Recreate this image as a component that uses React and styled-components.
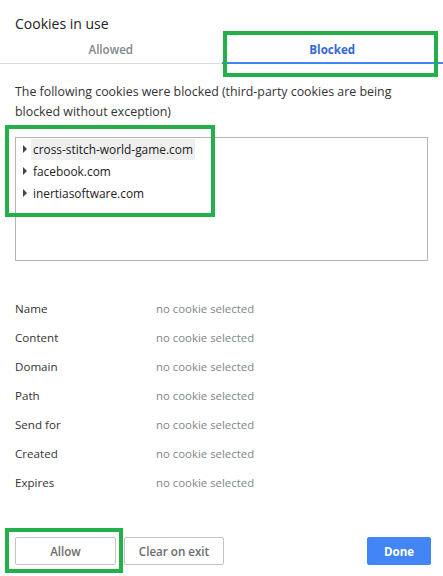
import React from "react";
import styled, { createGlobalStyle } from "styled-components";

const Global = createGlobalStyle`
  html, body { margin: 0; padding: 0; background: #fff; }
  body { font-family: "Open Sans", "Noto Sans", sans-serif; }
  * { box-sizing: border-box; }
`;

const Page = styled.div`
  position: relative;
  width: 443px;
  height: 576px;
  overflow: hidden;
  background: #fff;
  display: flex;
  flex-direction: column;
`;

const Title = styled.h1`
  margin: 0;
  padding: 13px 15px 0;
  font-size: 14px;
  font-weight: 400;
  line-height: 22px;
  color: #202124;
`;

const Tabs = styled.div`
  display: flex;
  height: 29px;
  border-bottom: 1px solid #dadce0;
`;

const Tab = styled.div`
  flex: 1;
  display: flex;
  align-items: center;
  justify-content: center;
  font-size: 11.6px;
  font-weight: ${(p) => (p.$active ? 700 : 600)};
  color: ${(p) => (p.$active ? "#3367d6" : "#80868b")};
  border-bottom: ${(p) => (p.$active ? "2px solid #4285f4" : "2px solid transparent")};
  margin-bottom: -1px;
  padding-top: 2px;
`;

const Body = styled.div`
  padding: 18px 15px 0;
  display: flex;
  flex-direction: column;
`;

const Description = styled.p`
  margin: 0;
  font-size: 12.4px;
  line-height: 20px;
  color: #333;
`;

const TreeBox = styled.div`
  margin-top: 15px;
  height: 124px;
  border: 1px solid #b5b5b5;
  padding: 0 0 0 7px;
  display: flex;
  flex-direction: column;
`;

const TreeItem = styled.div`
  display: flex;
  align-items: center;
  height: 22px;
`;

const Arrow = styled.span`
  width: 0;
  height: 0;
  border-top: 4px solid transparent;
  border-bottom: 4px solid transparent;
  border-left: 4px solid #444;
  margin-right: 4px;
`;

const ItemLabel = styled.span`
  font-size: 11.9px;
  color: #222;
  padding: 0 2px;
  line-height: 21px;
  background: ${(p) => (p.$selected ? "#efefef" : "transparent")};
`;

const Details = styled.div`
  margin-top: 33px;
  display: grid;
  grid-template-columns: 141px 1fr;
  grid-auto-rows: 29px;
  align-items: center;
`;

const Label = styled.div`
  font-size: 11.6px;
  color: #333;
`;

const Value = styled.div`
  font-size: 11.4px;
  color: #80868b;
`;

const Footer = styled.div`
  margin-top: auto;
  padding: 0 12px 11px 15px;
  display: flex;
  align-items: center;
  gap: 8px;
`;

const Button = styled.button`
  height: 28px;
  width: ${(p) => p.$w}px;
  border-radius: 2px;
  font-family: inherit;
  font-size: 11.6px;
  font-weight: ${(p) => (p.$primary ? 700 : 600)};
  border: 1px solid ${(p) => (p.$primary ? "#4285f4" : "#c4c4c4")};
  background: ${(p) => (p.$primary ? "#4285f4" : "#fff")};
  color: ${(p) => (p.$primary ? "#fff" : "#6b6b6b")};
  margin-left: ${(p) => (p.$push ? "auto" : "0")};
  padding: 0;
`;

const Highlight = styled.div`
  position: absolute;
  border: 4px solid #22b04b;
  pointer-events: none;
`;

const items = ["cross-stitch-world-game.com", "facebook.com", "inertiasoftware.com"];
const fields = ["Name", "Content", "Domain", "Path", "Send for", "Created", "Expires"];

const boxes = [
  { left: 223, top: 31, width: 215, height: 46 },
  { left: 5, top: 125, width: 210, height: 92 },
  { left: 5, top: 528, width: 118, height: 45 },
];

export default function App() {
  return (
    <Page>
      <Global />
      <Title>Cookies in use</Title>
      <Tabs>
        <Tab>Allowed</Tab>
        <Tab $active>Blocked</Tab>
      </Tabs>
      <Body>
        <Description>
          The following cookies were blocked (third-party cookies are being blocked without exception)
        </Description>
        <TreeBox>
          {items.map((it, i) => (
            <TreeItem key={it}>
              <Arrow />
              <ItemLabel $selected={i === 0}>{it}</ItemLabel>
            </TreeItem>
          ))}
        </TreeBox>
        <Details>
          {fields.map((f) => (
            <React.Fragment key={f}>
              <Label>{f}</Label>
              <Value>no cookie selected</Value>
            </React.Fragment>
          ))}
        </Details>
      </Body>
      <Footer>
        <Button $w={101}>Allow</Button>
        <Button $w={100}>Clear on exit</Button>
        <Button $w={64} $primary $push>Done</Button>
      </Footer>
      {boxes.map((b, i) => (
        <Highlight key={i} style={b} />
      ))}
    </Page>
  );
}
